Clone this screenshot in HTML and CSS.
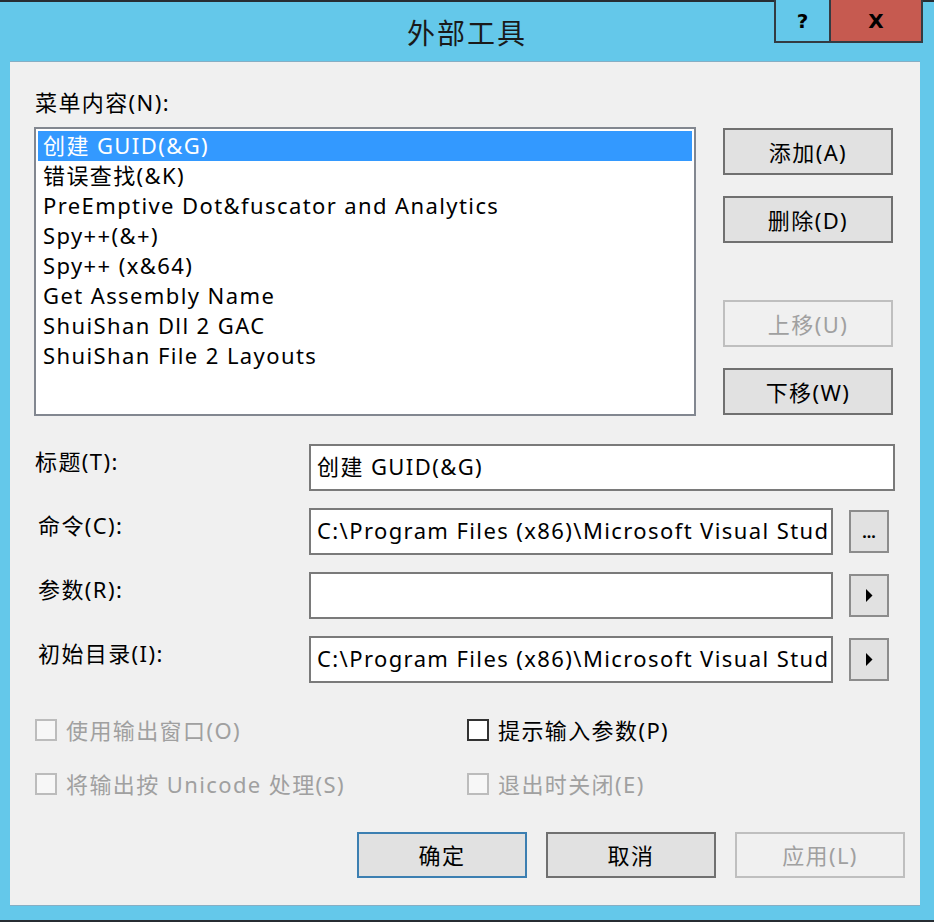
FILE: index.html
```html
<!DOCTYPE html>
<html lang="zh-CN">

<head>
    <meta charset="utf-8">
    <title>外部工具</title>
    <link rel="stylesheet" href="styles.css">
</head>

<body>
    <div class="window">
        <div class="titlebar">
            <div></div>
            <div class="title">外部工具</div>
            <div class="caption">
                <span class="cap help">?</span>
                <span class="cap close">X</span>
            </div>
        </div>

        <div class="panel">
            <div class="label menu-label">菜单内容(N):</div>

            <div class="top">
                <ul class="list">
                    <li class="selected">创建 GUID(&amp;G)</li>
                    <li>错误查找(&amp;K)</li>
                    <li>PreEmptive Dot&amp;fuscator and Analytics</li>
                    <li>Spy++(&amp;+)</li>
                    <li>Spy++ (x&amp;64)</li>
                    <li>Get Assembly Name</li>
                    <li>ShuiShan Dll 2 GAC</li>
                    <li>ShuiShan File 2 Layouts</li>
                </ul>
                <div class="side">
                    <button class="btn add">添加(A)</button>
                    <button class="btn remove">删除(D)</button>
                    <button class="btn up" disabled>上移(U)</button>
                    <button class="btn down">下移(W)</button>
                </div>
            </div>

            <div class="form">
                <div class="row">
                    <div class="label field-label first">标题(T):</div>
                    <div class="field wide">创建 GUID(&amp;G)</div>
                </div>
                <div class="row">
                    <div class="label field-label">命令(C):</div>
                    <div class="field">C:\Program Files (x86)\Microsoft Visual Stud</div>
                    <button class="mini dots">...</button>
                </div>
                <div class="row">
                    <div class="label field-label">参数(R):</div>
                    <div class="field"></div>
                    <button class="mini">
                        <svg width="8" height="13" viewBox="0 0 8 13"><path d="M1 0 L7.5 6.5 L1 13 Z" fill="#000"/></svg>
                    </button>
                </div>
                <div class="row">
                    <div class="label field-label">初始目录(I):</div>
                    <div class="field">C:\Program Files (x86)\Microsoft Visual Stud</div>
                    <button class="mini">
                        <svg width="8" height="13" viewBox="0 0 8 13"><path d="M1 0 L7.5 6.5 L1 13 Z" fill="#000"/></svg>
                    </button>
                </div>
            </div>

            <div class="checks">
                <div class="check disabled"><span class="box"></span>使用输出窗口(O)</div>
                <div class="check"><span class="box"></span>提示输入参数(P)</div>
                <div class="check disabled"><span class="box"></span>将输出按 Unicode 处理(S)</div>
                <div class="check disabled"><span class="box"></span>退出时关闭(E)</div>
            </div>

            <div class="actions">
                <button class="btn wide-btn default">确定</button>
                <button class="btn wide-btn">取消</button>
                <button class="btn wide-btn" disabled>应用(L)</button>
            </div>
        </div>
    </div>
</body>

</html>
```

FILE: styles.css
```css
body {
    margin: 0;
    padding: 0;
    background-color: #272d33;
    font-family: "Noto Sans", "Noto Sans CJK SC", sans-serif;
    font-size: 22px;
    letter-spacing: 1.4px;
    color: #000;
}

.window {
    margin-top: 2px;
    height: 918px;
    background-color: #64c8ea;
    display: flex;
    flex-direction: column;
}

/* title bar */
.titlebar {
    height: 59px;
    display: grid;
    grid-template-columns: 1fr auto 1fr;
}

.title {
    font-size: 28px;
    letter-spacing: 2px;
    color: #1a1a1a;
    align-self: center;
    padding-top: 1px;
}

.caption {
    justify-self: end;
    align-self: start;
    display: flex;
    margin-right: 11px;
    margin-top: -2px;
}

.cap {
    box-sizing: border-box;
    height: 43px;
    display: flex;
    align-items: center;
    justify-content: center;
    font-family: "DejaVu Sans", sans-serif;
    font-weight: bold;
    font-size: 20px;
    letter-spacing: 0;
    border: 2px solid #333b42;
    border-top: none;
}

.help {
    width: 57px;
    background-color: #64c8ea;
}

.close {
    width: 92px;
    border-left: none;
    background-color: #c65a50;
}

/* dialog body */
.panel {
    margin: 0 14px 0 10px;
    height: 845px;
    box-sizing: border-box;
    background-color: #f0f0f0;
    border-top: 1px solid #86aec4;
    border-bottom: 1px solid #86aec4;
    padding: 25px 15px 0 24px;
}

.label {
    line-height: 30px;
}

.menu-label {
    padding-left: 1px;
}

.top {
    display: flex;
    margin-top: 10px;
}

.list {
    list-style: none;
    margin: 0;
    padding: 2px;
    width: 662px;
    height: 289px;
    box-sizing: border-box;
    background-color: white;
    border: 2px solid #828790;
}

.list li {
    height: 30px;
    line-height: 28px;
    padding-left: 5px;
    white-space: nowrap;
}

.list .selected {
    background-color: #3399ff;
    color: white;
}

.side {
    margin-left: 27px;
    width: 170px;
    display: flex;
    flex-direction: column;
}

.btn {
    font-family: inherit;
    font-size: 22px;
    letter-spacing: 1.4px;
    color: #000;
    background-color: #e1e1e1;
    border: 2px solid #707070;
    border-radius: 0;
    height: 47px;
    padding: 0 0 2px;
}

.btn:disabled {
    background-color: #f0f0f0;
    border-color: #bfbfbf;
    color: #a0a0a0;
}

.add {
    margin-top: 1px;
}

.remove {
    margin-top: 21px;
}

.up {
    margin-top: 57px;
}

.down {
    margin-top: 21px;
}

/* fields */
.form {
    margin-top: 28px;
    display: flex;
    flex-direction: column;
    gap: 17px;
}

.row {
    display: flex;
    align-items: flex-start;
}

.field-label {
    width: 275px;
    flex-shrink: 0;
    box-sizing: border-box;
    line-height: 28px;
    padding-top: 3px;
    padding-left: 4px;
}

.field-label.first {
    padding-left: 1px;
}

.field {
    width: 524px;
    height: 47px;
    box-sizing: border-box;
    background-color: white;
    border: 2px solid #7a7a7a;
    padding-left: 6px;
    line-height: 41px;
    white-space: nowrap;
    overflow: hidden;
}

.field.wide {
    width: 586px;
}

.mini {
    margin-left: 16px;
    margin-top: 2px;
    width: 40px;
    height: 43px;
    box-sizing: border-box;
    background-color: #e1e1e1;
    border: 2px solid #8c8c8c;
    border-radius: 0;
    padding: 0;
    display: flex;
    align-items: center;
    justify-content: center;
}

.dots {
    font-family: inherit;
    font-size: 16px;
    font-weight: bold;
    letter-spacing: 0;
    align-items: flex-end;
    padding-bottom: 8px;
}

/* check boxes */
.checks {
    margin-top: 35px;
    display: grid;
    grid-template-columns: 432px 1fr;
    row-gap: 30px;
    padding-left: 1px;
}

.check {
    display: flex;
    align-items: center;
    height: 24px;
    line-height: 22px;
    white-space: nowrap;
}

.box {
    width: 22px;
    height: 22px;
    box-sizing: border-box;
    background-color: white;
    border: 2px solid #333;
    margin-right: 9px;
}

.check.disabled {
    color: #a0a0a0;
}

.check.disabled .box {
    border-color: #bcbcbc;
    background-color: #f7f7f7;
}

/* bottom buttons */
.actions {
    margin-top: 36px;
    display: flex;
    justify-content: flex-end;
    gap: 19px;
}

.wide-btn {
    width: 170px;
    height: 46px;
}

.default {
    border-color: #3c7fb1;
}
```
